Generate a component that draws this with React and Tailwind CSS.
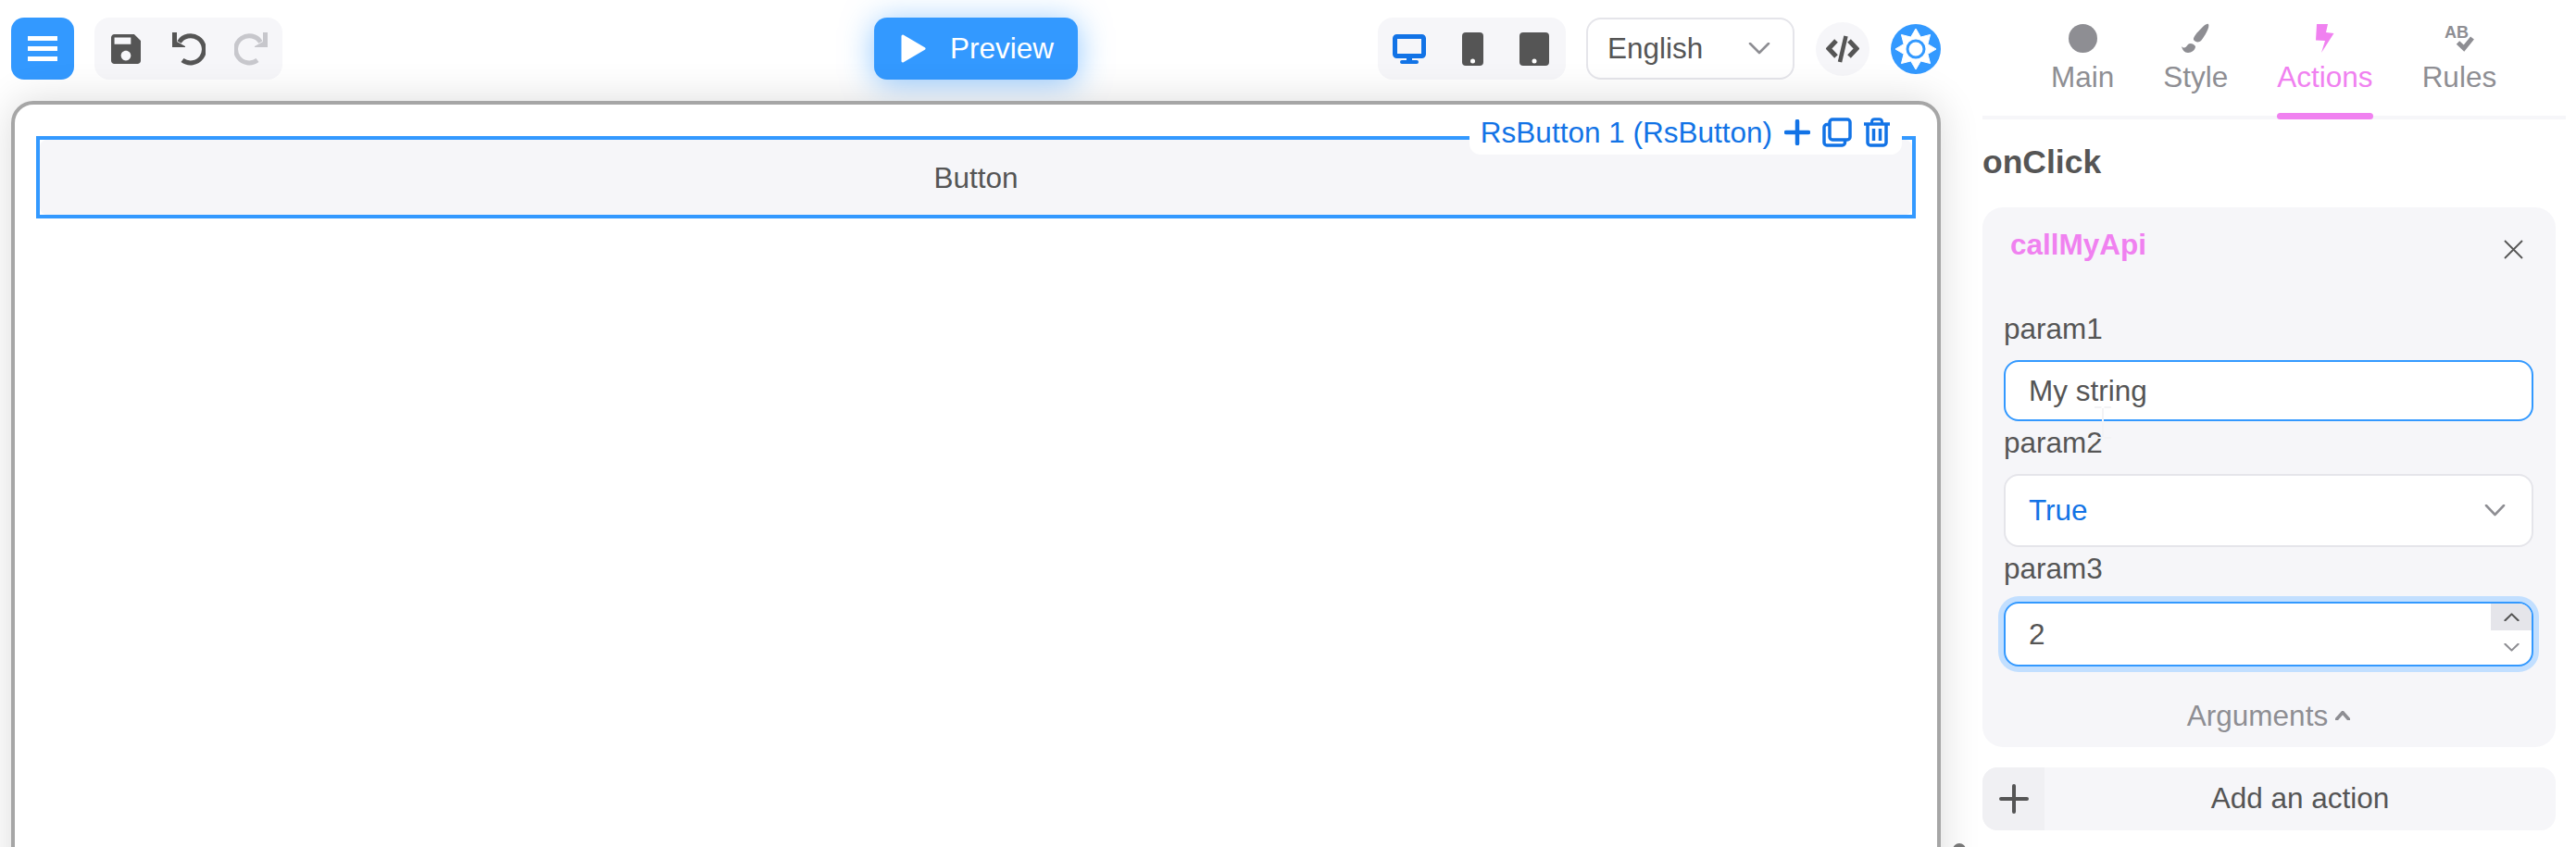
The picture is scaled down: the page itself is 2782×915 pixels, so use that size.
import React from "react";

// 8 point sun used for the settings button
const starPoints = (cx, cy, outer, inner) => {
  const pts = [];
  for (let i = 0; i < 16; i++) {
    const r = i % 2 === 0 ? outer : inner;
    const a = (i * Math.PI) / 8 - Math.PI / 2;
    pts.push(`${(cx + r * Math.cos(a)).toFixed(2)},${(cy + r * Math.sin(a)).toFixed(2)}`);
  }
  return pts.join(" ");
};

const UndoIcon = ({ color, flip }) => (
  <svg width="36" height="36" viewBox="0 0 36 36" className={flip ? "-scale-x-100" : ""}>
    <path d="M7.5 10.5A14.6 14.6 0 1 1 11 30" fill="none" stroke={color} strokeWidth="5" />
    <path d="M0 0H5V10L14 15V16H0Z" fill={color} />
  </svg>
);

const Chevron = ({ width, height, stroke, strokeWidth, up }) => (
  <svg width={width} height={height} viewBox="0 0 24 13" preserveAspectRatio="none">
    <path
      d={up ? "M2 12L12 2L22 12" : "M2 1L12 11L22 1"}
      fill="none"
      stroke={stroke}
      strokeWidth={strokeWidth}
      strokeLinecap="round"
      strokeLinejoin="round"
    />
  </svg>
);

const Tab = ({ label, active, children }) => (
  <div className={`relative flex flex-col items-center ${active ? "text-[#f081f0]" : "text-[#8e8e93]"}`}>
    <div className="flex h-[32px] items-center justify-center">{children}</div>
    <span className="mt-[8px] leading-[36px]">{label}</span>
    {active && <div className="absolute top-[97px] h-[7px] w-full rounded-full bg-[#f081f0]"></div>}
  </div>
);

const TopBar = () => (
  <div className="grid h-[109px] shrink-0 grid-cols-[1fr_auto_1fr] items-start pt-[19px]">
    <div className="flex gap-[22px]">
      <button className="flex h-[67px] w-[68px] flex-col items-center justify-center gap-[6px] rounded-[14px] bg-[#3399ff]">
        <span className="h-[5px] w-[32px] bg-white"></span>
        <span className="h-[5px] w-[32px] bg-white"></span>
        <span className="h-[5px] w-[32px] bg-white"></span>
      </button>
      <div className="flex h-[67px] w-[203px] items-center gap-[34px] rounded-[16px] bg-[#f6f6f9] pl-[18px]">
        <svg width="32" height="32" viewBox="3 3 18 18">
          <path
            fill="#555555"
            d="M17 3H5c-1.11 0-2 .9-2 2v14c0 1.1.89 2 2 2h14c1.1 0 2-.9 2-2V7l-4-4zm-5 16c-1.66 0-3-1.34-3-3s1.34-3 3-3 3 1.34 3 3-1.34 3-3 3zm3-10H5V5h10v4z"
          />
        </svg>
        <UndoIcon color="#555555" />
        <div className="-ml-[3px]">
          <UndoIcon color="#c7c7cc" flip />
        </div>
      </div>
    </div>

    <button className="flex h-[67px] w-[220px] items-center gap-[26px] rounded-[14px] bg-[#3399ff] pl-[29px] text-white shadow-[0_4px_34px_rgba(51,153,255,0.55)]">
      <svg width="27" height="31" viewBox="0 0 27 31">
        <path d="M2 2L25 15.5L2 29Z" fill="white" stroke="white" strokeWidth="3" strokeLinejoin="round" />
      </svg>
      <span>Preview</span>
    </button>

    <div className="flex items-center justify-end">
      <div className="flex h-[67px] w-[203px] items-center rounded-[16px] bg-[#f6f6f9] pl-[16px]">
        <svg width="36" height="32" viewBox="0 0 36 32" className="mr-[39px]">
          <rect x="2.5" y="2.5" width="31" height="21" rx="2" fill="none" stroke="#1273e6" strokeWidth="5" />
          <rect x="15" y="25" width="6" height="5" fill="#1273e6" />
          <rect x="8" y="28" width="20" height="4" rx="2" fill="#1273e6" />
        </svg>
        <svg width="23" height="36" viewBox="0 0 23 36" className="mr-[39px]">
          <rect width="23" height="36" rx="4" fill="#555555" />
          <circle cx="11.5" cy="31" r="2.5" fill="white" />
        </svg>
        <svg width="32" height="36" viewBox="0 0 32 36">
          <rect width="32" height="36" rx="4" fill="#555555" />
          <circle cx="16" cy="31" r="2.5" fill="white" />
        </svg>
      </div>
      <div className="ml-[22px] flex h-[67px] w-[225px] items-center justify-between rounded-[16px] border-2 border-[#e5e5ea] bg-white pl-[21px] pr-[24px]">
        <span className="pt-[1px]">English</span>
        <Chevron width={24} height={13} stroke="#8e8e93" strokeWidth={2.6} />
      </div>
      <div className="ml-[23px] flex h-[58px] w-[58px] items-center justify-center rounded-full bg-[#f6f6f9]">
        <svg width="36" height="30" viewBox="0 0 36 30" fill="none" stroke="#555555" strokeLinejoin="miter">
          <path d="M11 6L3 14.5L11 23" strokeWidth="5" />
          <path d="M25 6L33 14.5L25 23" strokeWidth="5" />
          <path d="M21.5 1L15 29" strokeWidth="4.5" />
        </svg>
      </div>
      <div className="ml-[23px] flex h-[54px] w-[54px] items-center justify-center rounded-full bg-[#3399ff]">
        <svg width="48" height="48" viewBox="0 0 48 48">
          <polygon points={starPoints(24, 24, 22, 14)} fill="white" stroke="white" strokeWidth="1" strokeLinejoin="round" />
          <circle cx="24" cy="24" r="9" fill="white" stroke="#3399ff" strokeWidth="3" />
        </svg>
      </div>
    </div>
  </div>
);

const Canvas = () => (
  <div className="h-[900px] shrink-0 rounded-[24px] border-4 border-[#a6a6a6] bg-white px-[23px] pt-[34px] shadow-[0_0_44px_rgba(0,0,0,0.14)]">
    <div className="relative h-[89px] border-4 border-[#3399ff]">
      <div className="flex h-full items-center justify-center rounded-[8px] bg-[#f6f6f9] pt-[2px]">Button</div>
      <div className="absolute right-[11px] top-[-32px] flex h-[48px] items-center gap-[13px] rounded-[12px] bg-white pl-[12px] pr-[13px] text-[#1273e6]">
        <span className="pt-[2px]">RsButton 1 (RsButton)</span>
        <svg width="28" height="28" viewBox="0 0 28 28">
          <path d="M14 2V26M2 14H26" stroke="#1273e6" strokeWidth="4.5" strokeLinecap="round" />
        </svg>
        <svg width="32" height="32" viewBox="0 0 32 32" fill="none" stroke="#1273e6" strokeWidth="3.5">
          <rect x="8" y="2" width="22" height="22" rx="3" />
          <path d="M8 7.5H5A3 3 0 0 0 2 10.5V27A3 3 0 0 0 5 30H21.5A3 3 0 0 0 24.5 27V24" />
        </svg>
        <svg width="28" height="32" viewBox="0 0 28 32" fill="none" stroke="#1273e6" strokeWidth="3.5">
          <path d="M0 7H28" />
          <path d="M8.5 7V4.5A3 3 0 0 1 11.5 1.8H16.5A3 3 0 0 1 19.5 4.5V7" strokeWidth="3" />
          <path d="M4 7V27A3 3 0 0 0 7 30H21A3 3 0 0 0 24 27V7" />
          <path d="M10.5 12V25M17.5 12V25" />
        </svg>
      </div>
    </div>
  </div>
);

const Sidebar = () => (
  <div className="ml-[45px] w-[630px] shrink-0 pt-[25px]">
    <div className="box-content flex h-[100px] gap-[53px] border-b-4 border-[#f6f6f9] pl-[74px]">
      <Tab label="Main">
        <div className="h-[31px] w-[31px] rounded-full bg-[#8e8e93]"></div>
      </Tab>
      <Tab label="Style">
        <svg width="34" height="34" viewBox="0 0 34 34" fill="#8e8e93">
          <path d="M31 2C33 5 27 15 23 20C21 22 17 22 15 19C14 16 20 10 23 7C26 4 29 1 31 2Z" />
          <path d="M2 26C5 29 7 27 9 24C11 22 15 23 17 26C17 30 13 33 9 33C5 33 3 30 2 26Z" />
        </svg>
      </Tab>
      <Tab label="Actions" active>
        <svg width="20" height="31" viewBox="0 0 20 31" fill="#f081f0">
          <polygon points="1,0 13,0 11,9 19.5,10 6,31 10,18 0,17.6" />
        </svg>
      </Tab>
      <Tab label="Rules">
        <svg width="32" height="30" viewBox="0 0 32 30">
          <text x="0" y="15" fontSize="18" fontWeight="700" fill="#8e8e93" fontFamily="'Liberation Sans', sans-serif">
            AB
          </text>
          <path d="M14.5 20L21 26L30 15" fill="none" stroke="#8e8e93" strokeWidth="5" />
        </svg>
      </Tab>
    </div>

    <div className="mt-[26px] text-[35.5px] font-bold leading-[40px]">onClick</div>

    <div className="relative mt-[29px] w-[619px] rounded-[22px] bg-[#f6f6f9] pb-[16px] pl-[23px] pr-[24px]">
      <div className="-ml-[23px] -mr-[24px] flex h-[113px] items-start justify-between pl-[30px] pr-[35px]">
        <span className="pt-[22px] font-bold leading-[36px] text-[#f081f0]">callMyApi</span>
        <svg width="21" height="21" viewBox="0 0 21 21" className="mt-[35px]">
          <path d="M1 1L20 20M20 1L1 20" stroke="#555555" strokeWidth="1.8" />
        </svg>
      </div>

      <div className="leading-[36px]">param1</div>
      <input
        readOnly
        value="My string"
        className="mt-[16px] block h-[66px] w-full rounded-[16px] border-2 border-[#3399ff] bg-white pl-[25px] outline-none"
      />

      <div className="mt-[5px] leading-[36px]">param2</div>
      <div className="mt-[16px] flex h-[79px] items-center justify-between rounded-[16px] border-2 border-[#e5e5ea] bg-white pl-[25px] pr-[28px]">
        <span className="text-[#1273e6]">True</span>
        <Chevron width={23} height={13} stroke="#8e8e93" strokeWidth={2.6} />
      </div>

      <div className="mt-[5px] leading-[36px]">param3</div>
      <div className="relative mt-[18px] h-[70px] rounded-[16px] border-2 border-[#3399ff] bg-white ring-[6px] ring-[#c2dfff]">
        <input readOnly value="2" className="block h-full w-full bg-transparent pl-[25px] outline-none" />
        <div className="absolute inset-0 overflow-hidden rounded-[14px]">
          <div className="absolute right-0 top-0 flex h-[29px] w-[44px] items-center justify-center bg-[#e5e5ea]">
            <Chevron width={17} height={9} stroke="#555555" strokeWidth={3} up />
          </div>
          <div className="absolute right-0 top-[29px] flex h-[36px] w-[44px] items-center justify-center">
            <Chevron width={17} height={9} stroke="#8e8e93" strokeWidth={3} />
          </div>
        </div>
      </div>

      <div className="mt-[35px] flex items-center justify-center gap-[8px] leading-[36px] text-[#8e8e93]">
        <span>Arguments</span>
        <Chevron width={16} height={10} stroke="#8e8e93" strokeWidth={5} up />
      </div>

      {/* mouse cursor left in the capture */}
      <svg width="20" height="35" viewBox="0 0 20 35" className="absolute left-[120px] top-[215px]">
        <path d="M1 1H8.5M11.5 1H19M10 2V33M1 34H8.5M11.5 34H19" fill="none" stroke="#f3f3f5" strokeWidth="2" />
      </svg>
    </div>

    <div className="mt-[22px] flex h-[68px] w-[619px] overflow-hidden rounded-[16px] bg-[#f6f6f9]">
      <div className="flex w-[67px] shrink-0 items-center justify-center bg-[#f0f0f3]">
        <svg width="32" height="32" viewBox="0 0 32 32">
          <path d="M16 2V30M2 16H30" stroke="#555555" strokeWidth="4" strokeLinecap="round" />
        </svg>
      </div>
      <div className="flex flex-1 items-center justify-center">Add an action</div>
    </div>
  </div>
);

export default function App() {
  return (
    <div className="relative flex h-screen overflow-hidden bg-white font-['Liberation_Sans',Arial,sans-serif] text-[31.5px] text-[#555555]">
      <div className="flex w-[2096px] shrink-0 flex-col pl-[12px]">
        <TopBar />
        <Canvas />
      </div>
      <Sidebar />
      {/* top of a resize handle, cut by the window */}
      <div className="absolute left-[2109px] top-[911px] h-[14px] w-[14px] rounded-full bg-[#777777]"></div>
    </div>
  );
}
